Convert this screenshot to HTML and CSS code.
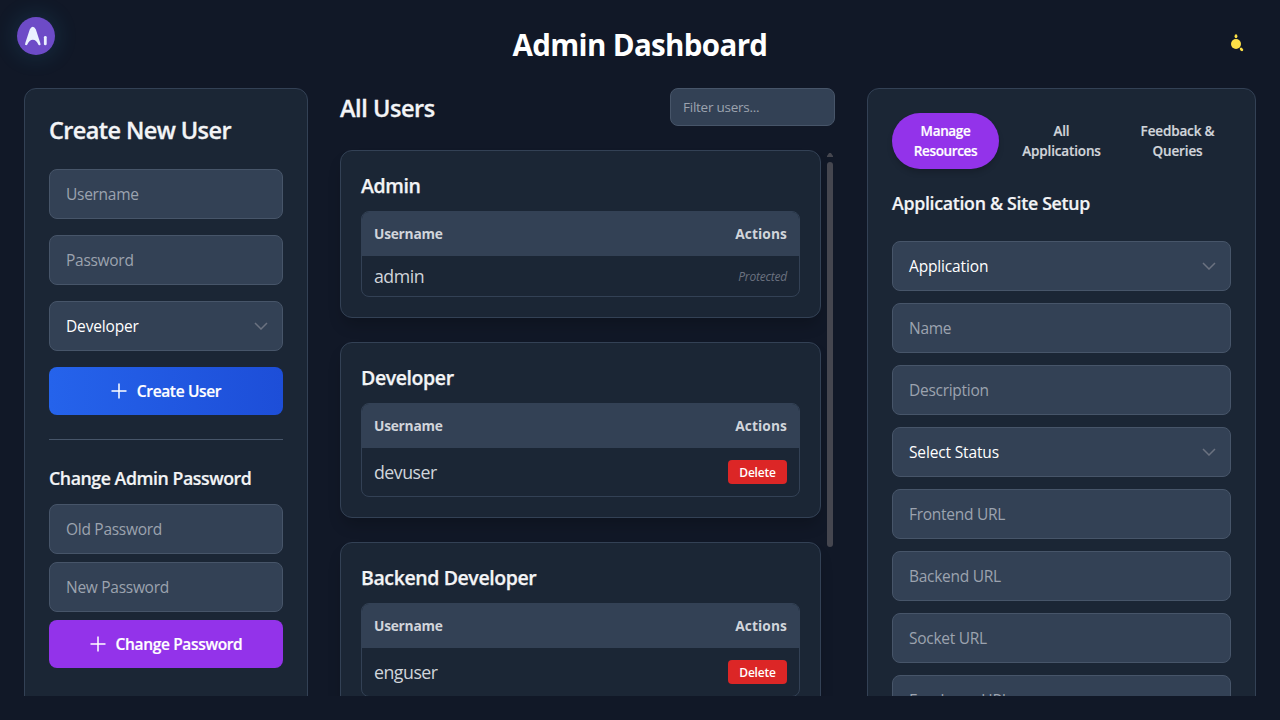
FILE: index.html
```html
<!DOCTYPE html>
<html lang="en">
<head>
<meta charset="utf-8">
<title>Admin Dashboard</title>
<link rel="stylesheet" href="styles.css">
</head>
<body>
<div class="logo">
  <svg width="38" height="38" viewBox="0 0 38 38"><circle cx="19" cy="19" r="19" fill="#6d4bc7"/><path d="M9.200 27L13.800 13Q15.800 8.800 17.800 13L22.400 27Q20.200 21.500 15.800 21.500Q11.500 21.500 9.200 27Z" fill="#eaf1ff" stroke="#eaf1ff" stroke-width="2.400" stroke-linejoin="round"/><path d="M28.300 20.300v6.600" stroke="#eaf1ff" stroke-width="2.800" stroke-linecap="round"/></svg>
</div>
<div class="page">
  <header class="header">
    <h1 class="title">Admin Dashboard</h1>
    <svg class="sun" width="20" height="20" viewBox="0 0 20 20" fill="#fde047"><circle cx="10" cy="10" r="5"/><ellipse cx="10" cy="2.200" rx="1.400" ry="2"/><ellipse cx="15.500" cy="15.400" rx="2" ry="1.400" transform="rotate(45 15.500 15.400)"/></svg>
  </header>
  <main class="columns">
    <section class="panel create">
      <h2 class="heading">Create New User</h2>
      <div class="stack">
        <input class="field" placeholder="Username">
        <input class="field" placeholder="Password">
        <div class="field select"><span>Developer</span><svg class="chevron" width="14" height="8" viewBox="0 0 14 8"><path d="M1 1l6 6 6-6"/></svg></div>
        <button class="button blue"><svg class="plus" width="16" height="16" viewBox="0 0 16 16"><path d="M8 .5v15M.5 8h15"/></svg><span>Create User</span></button>
      </div>
      <hr class="rule">
      <h3 class="subheading">Change Admin Password</h3>
      <div class="stack tight">
        <input class="field" placeholder="Old Password">
        <input class="field" placeholder="New Password">
        <button class="button purple"><svg class="plus" width="16" height="16" viewBox="0 0 16 16"><path d="M8 .5v15M.5 8h15"/></svg><span>Change Password</span></button>
      </div>
    </section>
    <section class="users">
      <div class="users-head"><h2 class="heading">All Users</h2><input class="filter" placeholder="Filter users..."></div>
      <div class="users-body">
        <div class="cards">
          <article class="card"><h3 class="role">Admin</h3>
            <div class="table"><div class="thead"><span class="name-col">Username</span><span>Actions</span></div><div class="row short"><span>admin</span><em class="protected">Protected</em></div></div></article>
          <article class="card"><h3 class="role">Developer</h3>
            <div class="table"><div class="thead"><span class="name-col">Username</span><span>Actions</span></div><div class="row"><span>devuser</span><button class="delete">Delete</button></div></div></article>
          <article class="card"><h3 class="role">Backend Developer</h3>
            <div class="table"><div class="thead"><span class="name-col">Username</span><span>Actions</span></div><div class="row"><span>enguser</span><button class="delete">Delete</button></div></div></article>
        </div>
        <div class="scrollbar"><div class="arrow"></div><div class="thumb"></div></div>
      </div>
    </section>
    <section class="panel resources">
      <nav class="tabs">
        <button class="tab active">Manage<br>Resources</button>
        <button class="tab">All<br>Applications</button>
        <button class="tab">Feedback &amp;<br>Queries</button>
      </nav>
      <h3 class="subheading">Application &amp; Site Setup</h3>
      <div class="stack medium">
        <div class="field select"><span>Application</span><svg class="chevron" width="14" height="8" viewBox="0 0 14 8"><path d="M1 1l6 6 6-6"/></svg></div>
        <input class="field" placeholder="Name">
        <input class="field" placeholder="Description">
        <div class="field select"><span>Select Status</span><svg class="chevron" width="14" height="8" viewBox="0 0 14 8"><path d="M1 1l6 6 6-6"/></svg></div>
        <input class="field" placeholder="Frontend URL">
        <input class="field" placeholder="Backend URL">
        <input class="field" placeholder="Socket URL">
        <input class="field" placeholder="Employee URL">
      </div>
    </section>
  </main>
</div>
</body>
</html>
```
FILE: styles.css
```css
* { box-sizing: border-box; margin: 0; padding: 0; }
body { height: 720px; overflow: hidden; background: #111827; color: #f3f4f6; font-family: "Noto Sans", "Open Sans", sans-serif; }
input, button { font-family: inherit; }
.logo { position: absolute; left: 17px; top: 17px; width: 38px; height: 38px; border-radius: 50%; box-shadow: 0 0 24px rgba(56, 189, 248, .17); }
.logo svg { display: block; }
.page { height: 720px; padding: 24px; display: flex; flex-direction: column; }
.header { height: 64px; flex: none; position: relative; text-align: center; }
.title { font-family: "Open Sans", sans-serif; font-size: 29.5px; line-height: 42px; font-weight: 700; color: #fff; letter-spacing: -.65px; }
.sun { position: absolute; right: 10px; top: 10px; }
.columns { flex: 1; min-height: 0; overflow: hidden; display: grid; grid-template-columns: 284px 495px 389px; gap: 32px; }
.panel { height: 900px; background: #1b2635; border: 1px solid #334155; border-radius: 12px; padding: 24px; }
.heading { font-family: "Open Sans", sans-serif; font-size: 23.5px; line-height: 32px; font-weight: 650; letter-spacing: -.6px; -webkit-text-stroke: .3px; }
.create .heading { margin: 1px 0 23px; }
.stack { display: flex; flex-direction: column; gap: 16px; }
.tight { gap: 8px; }
.medium { gap: 12px; }
.field { font-family: "Open Sans", sans-serif; display: flex; align-items: center; width: 100%; height: 50px; padding: 0 16px; background: #334155; border: 1px solid #475569; border-radius: 8px; color: #fff; font-size: 15.5px; letter-spacing: -.28px; }
input::placeholder { color: #9ca3af; opacity: 1; }
.select { justify-content: space-between; padding-right: 14px; letter-spacing: -.15px; }
.chevron { fill: none; stroke: #6b7280; stroke-width: 1.5; }
.button { font-family: "Open Sans", sans-serif; height: 48px; border: 0; border-radius: 8px; color: #fff; font-size: 15.5px; font-weight: 620; letter-spacing: -.35px; display: flex; align-items: center; justify-content: center; gap: 10px; -webkit-text-stroke: .2px; }
.plus { fill: none; stroke: #fff; stroke-width: 1.5; }
.blue { background: linear-gradient(90deg, #2563eb, #1d4ed8); }
.purple { background: #9333ea; }
.rule { border: 0; height: 1px; background: #475569; margin: 24px 0; }
.subheading { font-family: "Open Sans", sans-serif; font-size: 17.75px; line-height: 28px; font-weight: 620; letter-spacing: -.3px; -webkit-text-stroke: .2px; }
.create .subheading { margin: 0 0 12px; letter-spacing: -.45px; }
.users-head { display: flex; justify-content: space-between; height: 62px; }
.users-head .heading { padding-top: 4px; letter-spacing: -.45px; }
.filter { font-family: "Open Sans", sans-serif; width: 165px; height: 38px; padding: 0 12px; background: #334155; border: 1px solid #475569; border-radius: 8px; font-size: 13.5px; letter-spacing: -.25px; }
.users-body { display: flex; }
.cards { width: 481px; display: flex; flex-direction: column; gap: 24px; }
.card { padding: 20px; background: #1b2635; border: 1px solid #334155; border-radius: 12px; box-shadow: 0 10px 15px -3px rgba(0, 0, 0, .2); font-family: "Open Sans", sans-serif; }
.role { font-size: 19.5px; line-height: 28px; font-weight: 630; letter-spacing: -.4px; padding-top: 1px; margin-bottom: 11px; -webkit-text-stroke: .25px; }
.table { border: 1px solid #334155; border-radius: 8px; overflow: hidden; }
.thead { height: 44px; padding: 0 12px 1px; background: #334155; color: #d1d5db; display: flex; align-items: center; justify-content: space-between; font-size: 13.75px; font-weight: 750; letter-spacing: .1px; }
.name-col { letter-spacing: -.25px; }
.row { height: 48px; padding: 0 12px; display: flex; align-items: center; justify-content: space-between; color: #d1d5db; font-size: 17.75px; letter-spacing: -.5px; }
.short { height: 40px; }
.protected { font-size: 12px; color: #6b7280; letter-spacing: -.2px; }
.delete { font-family: inherit; width: 59px; height: 24px; border: 0; border-radius: 4px; background: #dc2626; color: #fff; font-size: 12px; font-weight: 620; letter-spacing: -.2px; }
.scrollbar { width: 14px; padding: 3px 2px 0 6px; }
.arrow { height: 4px; width: 6px; background: #45464f; clip-path: polygon(35% 0, 65% 0, 100% 75%, 100% 100%, 0 100%, 0 75%); }
.thumb { width: 6px; height: 385px; margin-top: 5px; border-radius: 3px; background: #45464f; }
.tabs { display: flex; gap: 9px; margin-bottom: 20px; }
.tab { font-family: "Open Sans", sans-serif; width: 107px; height: 56px; border: 0; border-radius: 28px; background: none; color: #d1d5db; font-size: 13.5px; line-height: 20px; font-weight: 630; letter-spacing: -.15px; -webkit-text-stroke: .2px; }
.active { background: #9333ea; color: #fff; letter-spacing: -.35px; box-shadow: 0 4px 6px -1px rgba(0, 0, 0, .2); }
.resources .subheading { margin-bottom: 24px; }
```
